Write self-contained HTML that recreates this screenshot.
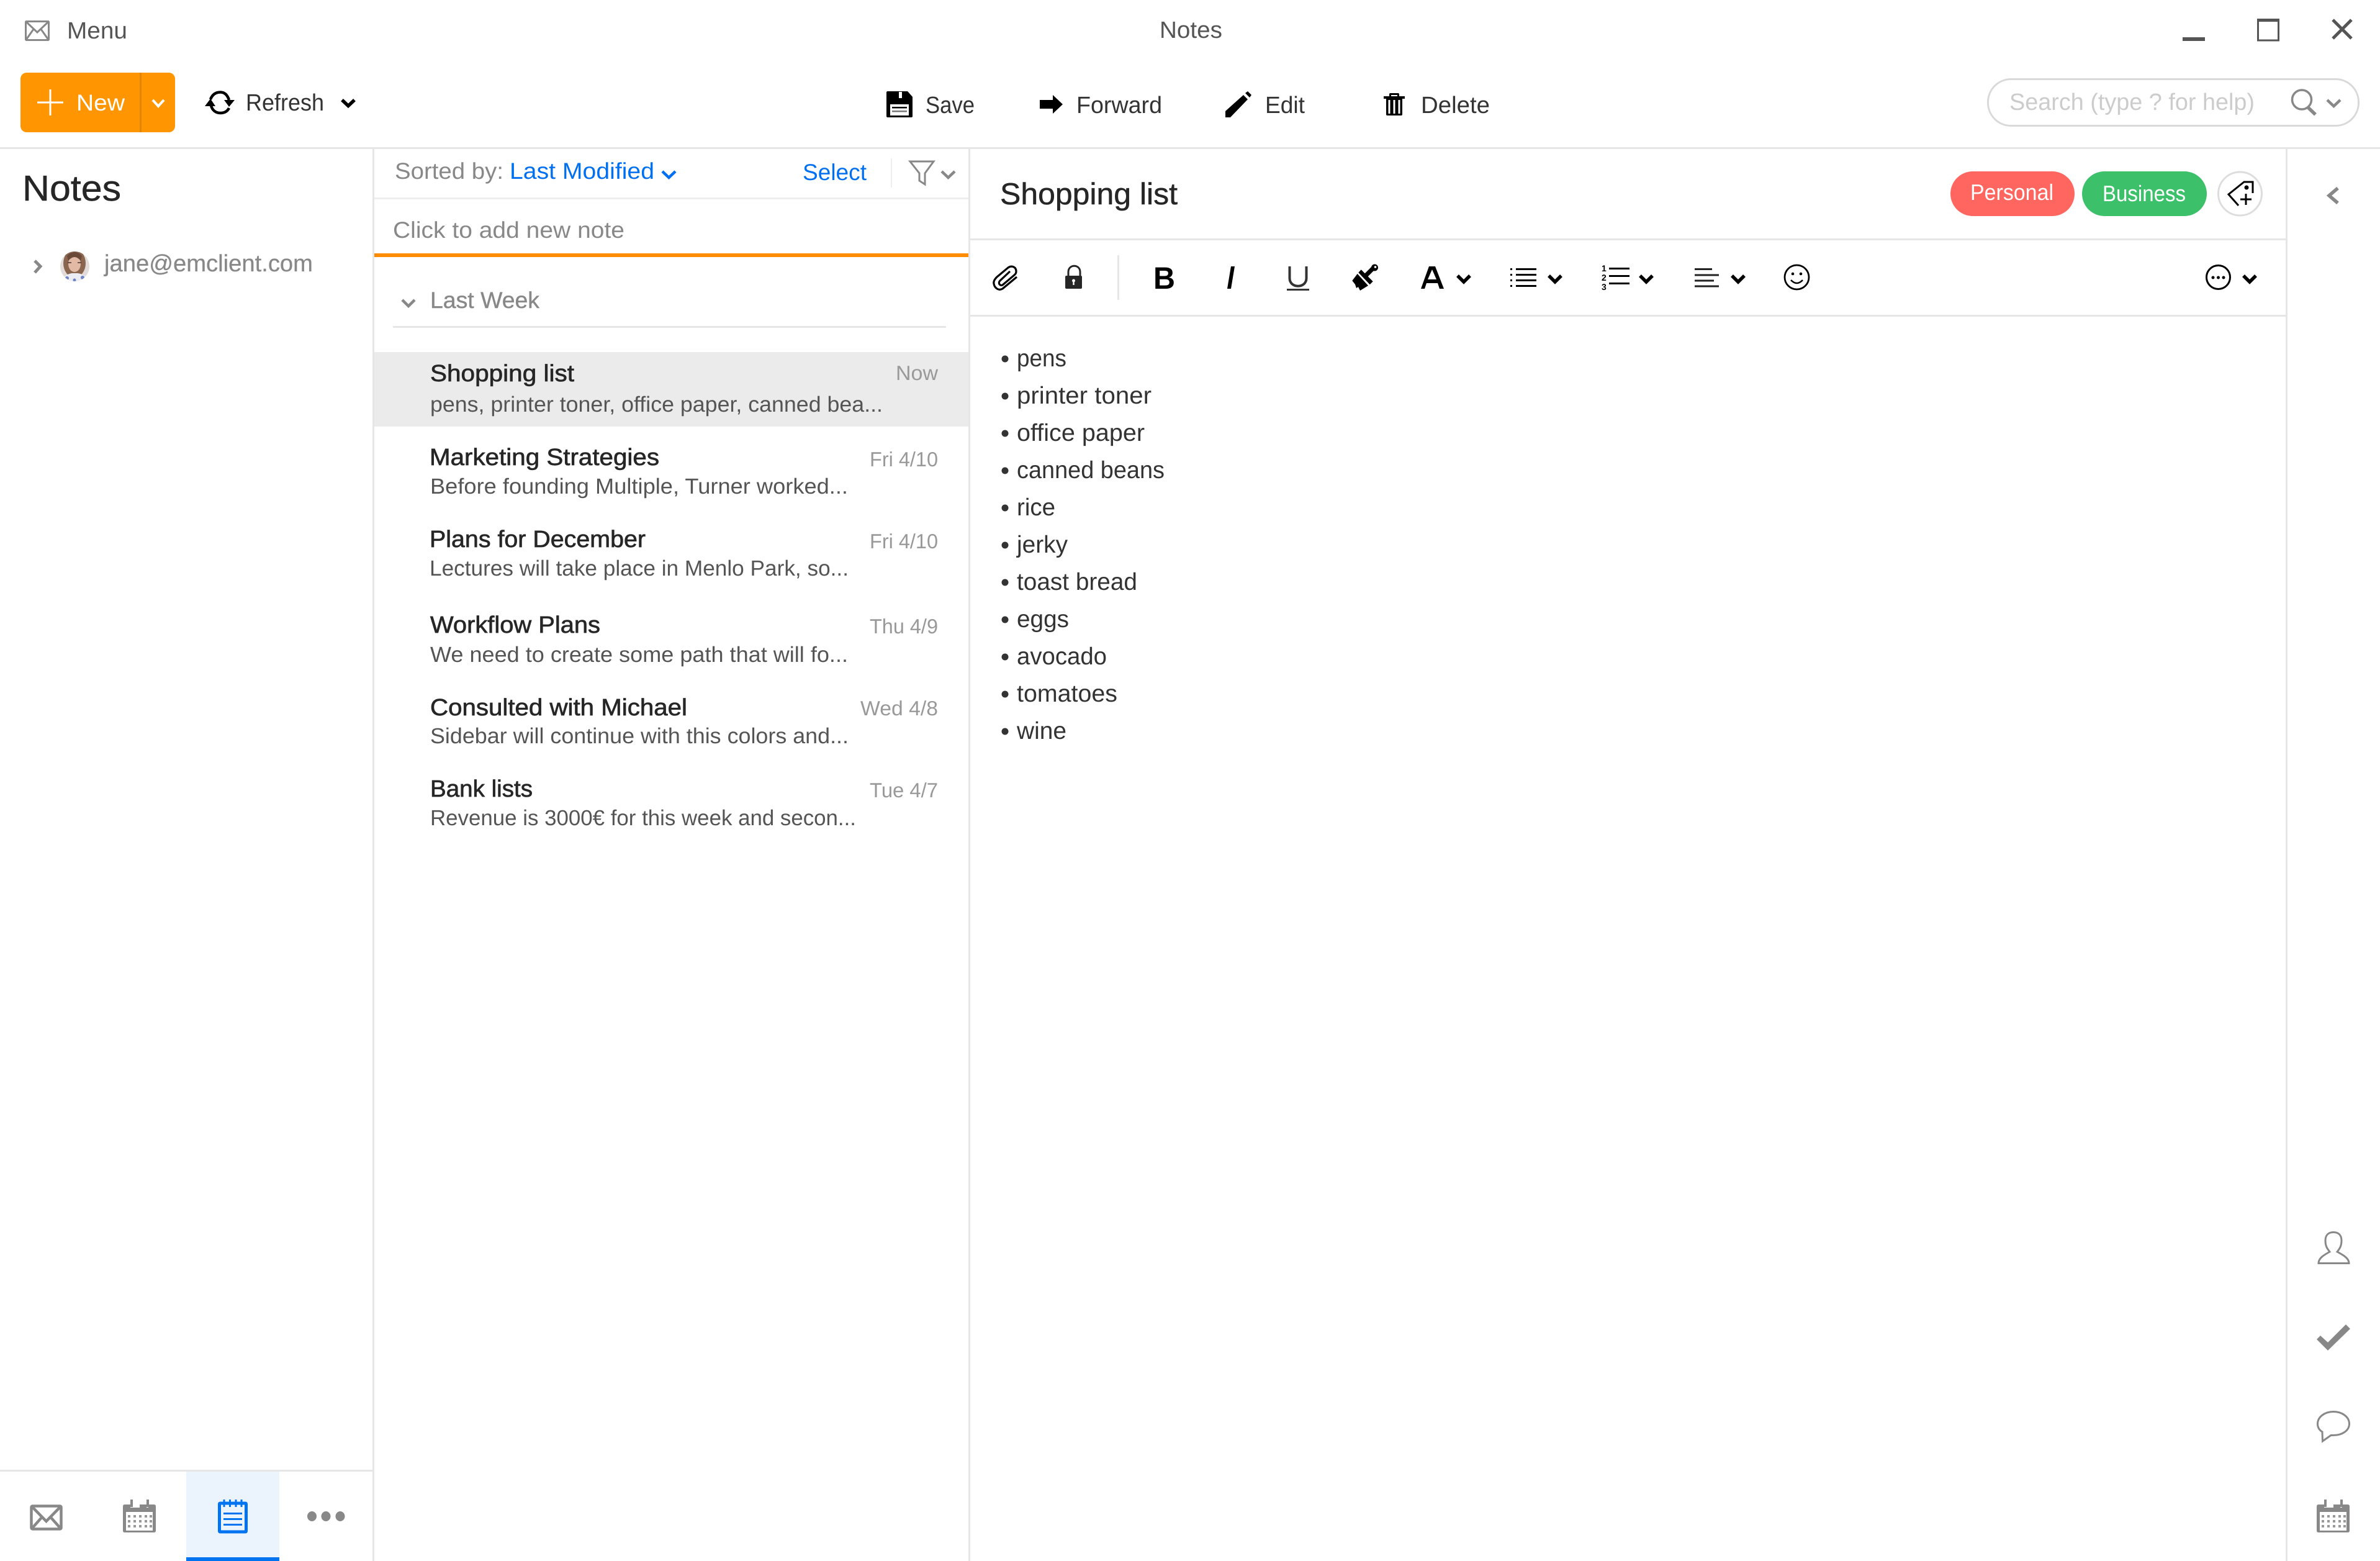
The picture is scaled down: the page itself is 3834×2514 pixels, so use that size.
<!DOCTYPE html>
<html lang="en"><head><meta charset="utf-8"><title>Notes</title>
<style>
html,body{margin:0;padding:0;background:#fff;width:3834px;height:2514px;overflow:hidden}
svg{display:block;font-family:"Liberation Sans",sans-serif;text-rendering:geometricPrecision}
.t{font-size:38px;fill:#333}
.m{font-size:38px;fill:#262626;stroke:#262626;stroke-width:.7}
.p{font-size:35px;fill:#555}
.d{font-size:33px;fill:#999}
.b{font-size:39px;fill:#333}
.g{fill:none;stroke:#888}
.c{fill:none;stroke:#000;stroke-width:5.5}
</style></head><body>
<svg xmlns="http://www.w3.org/2000/svg" width="3834" height="2514" viewBox="0 0 3834 2514">
<defs>
<symbol id="cal" viewBox="0 0 53 53" width="53" height="53">
<path d="M3 8H12V13H27V8H38V13H41V8H50Q53 8 53 11V50Q53 53 50 53H3Q0 53 0 50V11Q0 8 3 8Z" fill="#888"/>
<rect x="12" y="0" width="4" height="12" fill="#888"/><rect x="38" y="0" width="4" height="12" fill="#888"/>
<rect x="5" y="20" width="43" height="30" fill="#fff"/>
<g fill="#999"><rect x="8" y="25" width="4" height="4"/><rect x="17" y="25" width="4" height="4"/><rect x="26" y="25" width="4" height="4"/><rect x="35" y="25" width="4" height="4"/><rect x="43" y="25" width="4" height="4"/>
<rect x="8" y="33" width="4" height="4"/><rect x="17" y="33" width="4" height="4"/><rect x="26" y="33" width="4" height="4"/><rect x="35" y="33" width="4" height="4"/><rect x="43" y="33" width="4" height="4"/>
<rect x="8" y="41" width="4" height="4"/><rect x="17" y="41" width="4" height="4"/><rect x="26" y="41" width="4" height="4"/><rect x="35" y="41" width="4" height="4"/><rect x="43" y="41" width="4" height="4"/></g>
</symbol>
<clipPath id="av"><ellipse cx="120.5" cy="429" rx="23.5" ry="24"/></clipPath>
</defs>

<!-- structure lines -->
<rect x="0" y="237" width="3834" height="3" fill="#e6e6e6"/>
<rect x="600" y="240" width="3" height="2274" fill="#e6e6e6"/>
<rect x="1560" y="240" width="3" height="2274" fill="#e6e6e6"/>
<rect x="3682" y="240" width="3" height="2274" fill="#e6e6e6"/>
<rect x="603" y="318" width="957" height="3" fill="#eee"/>
<rect x="603" y="408" width="957" height="6" fill="#ff8c00"/>
<rect x="633" y="525" width="891" height="3" fill="#e6e6e6"/>
<rect x="603" y="567" width="957" height="120" fill="#ebebeb"/>
<rect x="1435" y="255" width="2" height="47" fill="#eee"/>
<rect x="1563" y="384" width="2119" height="3" fill="#e6e6e6"/>
<rect x="1563" y="507" width="2119" height="3" fill="#e6e6e6"/>
<rect x="1800" y="411" width="3" height="72" fill="#e6e6e6"/>
<rect x="0" y="2367" width="600" height="3" fill="#e6e6e6"/>

<!-- title bar -->
<g class="g" stroke-width="3"><rect x="41.5" y="34.5" width="37" height="30" rx="1"/><path d="M42 35L60 52L78 35M42 64L54 47M78 64L66 47"/></g>
<text x="108" y="62" class="t" style="fill:#555" textLength="97" lengthAdjust="spacingAndGlyphs">Menu</text>
<text x="1868" y="61" class="t" style="fill:#555" textLength="101" lengthAdjust="spacingAndGlyphs">Notes</text>
<rect x="3516" y="60" width="36" height="6" fill="#555"/>
<rect x="3637.5" y="32" width="33" height="33" fill="none" stroke="#555" stroke-width="3"/><rect x="3636" y="30" width="36" height="5" fill="#555"/>
<path d="M3758 32L3788 62M3788 32L3758 62" fill="none" stroke="#555" stroke-width="5"/>

<!-- new button -->
<rect x="33" y="117" width="249" height="96" rx="10" fill="#ff9500"/>
<rect x="225" y="117" width="3" height="96" fill="#e08600"/>
<path d="M60 165H102M81 144V186" stroke="#fff" stroke-width="3" fill="none"/>
<text x="123" y="178" style="font-size:37px;fill:#fff" textLength="78" lengthAdjust="spacingAndGlyphs">New</text>
<path d="M246 161L255 171L264 161" fill="none" stroke="#fff" stroke-width="4"/>

<!-- refresh -->
<path d="M339 160C343 150 350 148.5 355 148.5C361 148.5 366 152 369 161" fill="none" stroke="#000" stroke-width="4.5"/>
<path d="M361 161H378L369 172Z"/>
<path d="M340 170C342 178 348 182 355 182C361 182 366 180 369 174" fill="none" stroke="#000" stroke-width="4.5"/>
<path d="M330 171H347L339 159Z"/>
<text x="396" y="178" class="t" textLength="126" lengthAdjust="spacingAndGlyphs">Refresh</text>
<path class="c" d="M551 161L561 170.5L571 161"/>

<!-- save -->
<path d="M1430 147H1462L1470 156V187Q1470 189 1468 189H1430Q1428 189 1428 187V149Q1428 147 1430 147Z"/>
<rect x="1448" y="148" width="5" height="10" fill="#fff"/>
<rect x="1434" y="168" width="30" height="18" fill="#fff"/>
<rect x="1437" y="172" width="24" height="2.5" fill="#000"/><rect x="1437" y="178" width="24" height="2.5" fill="#777"/>
<text x="1491" y="182" class="t" textLength="79" lengthAdjust="spacingAndGlyphs">Save</text>
<!-- forward -->
<path d="M1675 161H1696V153L1712 168L1696 183V175H1675Z"/>
<text x="1734" y="182" class="t" textLength="138" lengthAdjust="spacingAndGlyphs">Forward</text>
<!-- edit -->
<path d="M1974 189V179L2003 153L2010 160L1982 189Z"/><path d="M2006 150L2010 147L2016 153L2013 157Z"/>
<text x="2038" y="182" class="t" textLength="64" lengthAdjust="spacingAndGlyphs">Edit</text>
<!-- delete -->
<path d="M2238 156V152Q2238 150 2240 150H2252Q2254 150 2254 152V156H2251V153H2241V156Z"/>
<rect x="2229" y="155" width="34" height="4"/>
<path d="M2233 159H2259V184Q2259 186 2257 186H2235Q2233 186 2233 184Z"/>
<rect x="2236.5" y="161" width="3" height="22" fill="#fff"/><rect x="2244.5" y="161" width="3" height="22" fill="#fff"/><rect x="2252.5" y="161" width="3" height="22" fill="#fff"/>
<text x="2289" y="182" class="t" textLength="111" lengthAdjust="spacingAndGlyphs">Delete</text>

<!-- search -->
<rect x="3202.5" y="127.5" width="597" height="75" rx="37" fill="#fff" stroke="#d9d9d9" stroke-width="3"/>
<text x="3237" y="177" style="font-size:38px;fill:#ccc" textLength="395" lengthAdjust="spacingAndGlyphs">Search (type ? for help)</text>
<circle cx="3708" cy="160.5" r="15.5" class="g" stroke-width="3.5"/>
<path d="M3718 173L3730 184.5" class="g" stroke-width="5.5"/>
<path d="M3749 161L3759.5 171L3770 161" class="g" stroke-width="4.5"/>

<!-- left pane -->
<text x="36" y="323" style="font-size:58px;fill:#262626;stroke:#262626;stroke-width:.5" textLength="159" lengthAdjust="spacingAndGlyphs">Notes</text>
<path d="M56 420L65 429L56 439" class="g" stroke-width="5"/>
<g clip-path="url(#av)">
<rect x="95" y="403" width="52" height="52" fill="#e2dbd8"/>
<ellipse cx="120" cy="424" rx="18" ry="23" fill="#8a6651"/>
<ellipse cx="120" cy="425" rx="10" ry="13" fill="#e2b9a5"/>
<path d="M110 420Q120 408 130 420L132 412Q120 400 108 412Z" fill="#6b4a3a"/>
<path d="M109 423h6M125 423h6" stroke="#4a3028" stroke-width="1.5"/>
<path d="M98 456Q102 442 116 440H125Q140 442 144 456Z" fill="#ecedf4"/>
<circle cx="108" cy="448" r="3" fill="#6f84c4"/><circle cx="133" cy="447" r="3" fill="#6f84c4"/><circle cx="120" cy="451" r="2.5" fill="#6f84c4"/>
</g>
<text x="168" y="437" class="t" style="fill:#888;stroke:#888;stroke-width:.3" textLength="336" lengthAdjust="spacingAndGlyphs">jane@emclient.com</text>

<!-- bottom nav -->
<rect x="300" y="2370" width="150" height="144" fill="#ebf3fd"/>
<rect x="300" y="2508" width="150" height="6" fill="#0073f0"/>
<g class="g" stroke-width="4.5"><rect x="50.5" y="2425.5" width="48" height="37" rx="2"/><path d="M51 2426L74.5 2450L98 2426M51 2462L67 2444M98 2462L82 2444"/></g>
<use href="#cal" x="198" y="2415"/>
<g fill="none" stroke="#0073f0">
<rect x="353.5" y="2421" width="43" height="46" rx="1" stroke-width="5"/>
<path d="M361 2415V2427M370.5 2415V2427M380 2415V2427M389 2415V2427" stroke-width="3"/>
<path d="M360 2437.5H390M360 2446.5H390M360 2455.5H390" stroke-width="3"/>
</g>
<g fill="#888"><ellipse cx="502.5" cy="2442" rx="7.5" ry="8"/><ellipse cx="525" cy="2442" rx="7.5" ry="8"/><ellipse cx="548" cy="2442" rx="7.5" ry="8"/></g>

<!-- list header -->
<text x="636" y="288" style="font-size:37px;fill:#888" textLength="175" lengthAdjust="spacingAndGlyphs">Sorted by:</text>
<text x="821" y="288" style="font-size:37px;fill:#0070f0" textLength="233" lengthAdjust="spacingAndGlyphs">Last Modified</text>
<path d="M1067 276L1077.5 286L1088 276" fill="none" stroke="#0070f0" stroke-width="4.5"/>
<text x="1293" y="290" style="font-size:37px;fill:#0070f0" textLength="103" lengthAdjust="spacingAndGlyphs">Select</text>
<path d="M1466 260H1504L1490 279V297L1481 291V279Z" class="g" stroke-width="3"/>
<path d="M1517 276L1527.5 286L1538 276" class="g" stroke-width="4.5"/>
<text x="633" y="383" style="font-size:37px;fill:#888" textLength="373" lengthAdjust="spacingAndGlyphs">Click to add new note</text>
<path d="M648 483L658 493L668 483" class="g" stroke-width="4.5"/>
<text x="693" y="496" style="font-size:37px;fill:#888;stroke:#888;stroke-width:.4" textLength="176" lengthAdjust="spacingAndGlyphs">Last Week</text>

<!-- list items -->
<text x="693" y="614" class="m" textLength="232" lengthAdjust="spacingAndGlyphs">Shopping list</text>
<text x="1443" y="612" class="d" textLength="68" lengthAdjust="spacingAndGlyphs">Now</text>
<text x="693" y="663" class="p" textLength="729" lengthAdjust="spacingAndGlyphs">pens, printer toner, office paper, canned bea...</text>

<text x="692" y="749" class="m" textLength="370" lengthAdjust="spacingAndGlyphs">Marketing Strategies</text>
<text x="1401" y="751" class="d" textLength="110" lengthAdjust="spacingAndGlyphs">Fri 4/10</text>
<text x="693" y="795" class="p" textLength="673" lengthAdjust="spacingAndGlyphs">Before founding Multiple, Turner worked...</text>

<text x="692" y="881" class="m" textLength="348" lengthAdjust="spacingAndGlyphs">Plans for December</text>
<text x="1401" y="883" class="d" textLength="110" lengthAdjust="spacingAndGlyphs">Fri 4/10</text>
<text x="692" y="927" class="p" textLength="675" lengthAdjust="spacingAndGlyphs">Lectures will take place in Menlo Park, so...</text>

<text x="693" y="1019" class="m" textLength="274" lengthAdjust="spacingAndGlyphs">Workflow Plans</text>
<text x="1401" y="1020" class="d" textLength="110" lengthAdjust="spacingAndGlyphs">Thu 4/9</text>
<text x="693" y="1066" class="p" textLength="673" lengthAdjust="spacingAndGlyphs">We need to create some path that will fo...</text>

<text x="693" y="1152" class="m" textLength="414" lengthAdjust="spacingAndGlyphs">Consulted with Michael</text>
<text x="1386" y="1152" class="d" textLength="125" lengthAdjust="spacingAndGlyphs">Wed 4/8</text>
<text x="693" y="1197" class="p" textLength="674" lengthAdjust="spacingAndGlyphs">Sidebar will continue with this colors and...</text>

<text x="693" y="1283" class="m" textLength="165" lengthAdjust="spacingAndGlyphs">Bank lists</text>
<text x="1401" y="1284" class="d" textLength="110" lengthAdjust="spacingAndGlyphs">Tue 4/7</text>
<text x="693" y="1329" class="p" textLength="686" lengthAdjust="spacingAndGlyphs">Revenue is 3000€ for this week and secon...</text>

<!-- note header -->
<text x="1611" y="329" style="font-size:49px;fill:#262626;stroke:#262626;stroke-width:.5" textLength="286" lengthAdjust="spacingAndGlyphs">Shopping list</text>
<rect x="3142" y="276" width="200" height="72" rx="36" fill="#ff665f"/>
<text x="3174" y="322" style="font-size:36px;fill:#fff" textLength="134" lengthAdjust="spacingAndGlyphs">Personal</text>
<rect x="3354" y="276" width="201" height="72" rx="36" fill="#3cc06a"/>
<text x="3387" y="324" style="font-size:36px;fill:#fff" textLength="134" lengthAdjust="spacingAndGlyphs">Business</text>
<circle cx="3608.5" cy="312" r="35" fill="#fff" stroke="#ddd" stroke-width="3"/>
<path d="M3606 331L3590 313L3615 293H3629V311" fill="none" stroke="#000" stroke-width="3"/>
<circle cx="3619" cy="302" r="3.5"/>
<path d="M3609 321H3627M3618 312V330" stroke="#000" stroke-width="3" fill="none"/>
<path d="M3766 303L3752 315L3766 327" class="g" stroke-width="5.5"/>

<!-- format toolbar -->
<path d="M1638 446L1615 465C1608 469 1602 463 1601 457C1600 453 1603 449 1606 446L1624 431C1630 427 1637 430 1637 437C1637 440 1636 441 1634 443L1615 459C1611 461 1607 456 1611 452L1627 437" fill="none" stroke="#000" stroke-width="3.2"/>
<path d="M1721 446V438C1721 425 1740 425 1740 438V446" fill="none" stroke="#262626" stroke-width="3"/>
<rect x="1716" y="444" width="27" height="21" rx="2" fill="#262626"/>
<circle cx="1729.5" cy="452" r="2.5" fill="#fff"/><rect x="1728.3" y="452" width="2.4" height="7" fill="#fff"/>
<text x="1858" y="465" style="font-size:50px;font-weight:700;fill:#000" textLength="35" lengthAdjust="spacingAndGlyphs">B</text>
<path d="M1983 429H1989L1983 465H1977Z"/>
<path d="M2077.5 429V448C2077.5 465 2104.5 465 2104.5 448V429" fill="none" stroke="#333" stroke-width="4"/>
<rect x="2073" y="465" width="36" height="3" fill="#333"/>
<circle cx="2214.5" cy="431" r="5.5"/>
<path d="M2213 431L2199 445" stroke="#000" stroke-width="7" fill="none"/>
<path d="M2192.7 434.3L2211.7 453.3L2206.7 458.3L2188.3 439Z"/>
<path d="M2186.7 441L2204 460L2191 468L2188 462L2185 464L2183 458L2178.3 452Z"/>
<circle cx="2215.5" cy="430" r="1.8" fill="#fff"/>
<path d="M2302 429H2312L2326 465H2319L2316 456H2298L2295 465H2289ZM2300 450H2314L2307 434Z" fill-rule="evenodd"/>
<path class="c" d="M2348 444L2358 454L2368 444"/>
<g fill="#000"><rect x="2433" y="432" width="3" height="3"/><rect x="2433" y="441" width="3" height="3"/><rect x="2433" y="450" width="3" height="3"/><rect x="2433" y="459" width="3" height="3"/>
<rect x="2442" y="432" width="33" height="3"/><rect x="2442" y="441" width="33" height="3"/><rect x="2442" y="450" width="33" height="3"/><rect x="2442" y="459" width="33" height="3"/></g>
<path class="c" d="M2495 444L2505 454L2515 444"/>
<g style="font-size:14px;font-weight:700;fill:#000"><text x="2580" y="437">1</text><text x="2580" y="452">2</text><text x="2580" y="467">3</text></g>
<g fill="#000"><rect x="2592" y="431" width="33" height="3"/><rect x="2592" y="443" width="33" height="3"/><rect x="2592" y="455" width="33" height="3"/></g>
<path class="c" d="M2642 444L2652 454L2662 444"/>
<g fill="#222"><rect x="2730" y="432" width="28" height="3"/><rect x="2730" y="441.5" width="39" height="3"/><rect x="2730" y="450.5" width="31" height="3"/><rect x="2730" y="459.5" width="39" height="3"/></g>
<path class="c" d="M2790 444L2800 454L2810 444"/>
<circle cx="2894.5" cy="446.5" r="19.5" fill="none" stroke="#000" stroke-width="2.8"/>
<circle cx="2888" cy="441" r="2.3"/><circle cx="2901" cy="441" r="2.3"/>
<path d="M2885 451Q2894.5 461 2904 451" fill="none" stroke="#000" stroke-width="2.5"/>
<circle cx="3573.5" cy="446.5" r="19" fill="none" stroke="#000" stroke-width="3"/>
<circle cx="3565" cy="447" r="2.5"/><circle cx="3573.5" cy="447" r="2.5"/><circle cx="3582" cy="447" r="2.5"/>
<path class="c" d="M3614 444L3624 454L3634 444"/>

<!-- note body -->
<g fill="#333"><circle cx="1619" cy="578" r="5.5"/><circle cx="1619" cy="638" r="5.5"/><circle cx="1619" cy="698" r="5.5"/><circle cx="1619" cy="758" r="5.5"/><circle cx="1619" cy="818" r="5.5"/><circle cx="1619" cy="878" r="5.5"/><circle cx="1619" cy="938" r="5.5"/><circle cx="1619" cy="998" r="5.5"/><circle cx="1619" cy="1058" r="5.5"/><circle cx="1619" cy="1118" r="5.5"/><circle cx="1619" cy="1178" r="5.5"/></g>
<text x="1638" y="590" class="b" textLength="80" lengthAdjust="spacingAndGlyphs">pens</text>
<text x="1638" y="650" class="b" textLength="217" lengthAdjust="spacingAndGlyphs">printer toner</text>
<text x="1638" y="710" class="b" textLength="206" lengthAdjust="spacingAndGlyphs">office paper</text>
<text x="1638" y="770" class="b" textLength="238" lengthAdjust="spacingAndGlyphs">canned beans</text>
<text x="1638" y="830" class="b" textLength="62" lengthAdjust="spacingAndGlyphs">rice</text>
<text x="1638" y="890" class="b" textLength="82" lengthAdjust="spacingAndGlyphs">jerky</text>
<text x="1638" y="950" class="b" textLength="194" lengthAdjust="spacingAndGlyphs">toast bread</text>
<text x="1638" y="1010" class="b" textLength="84" lengthAdjust="spacingAndGlyphs">eggs</text>
<text x="1638" y="1070" class="b" textLength="145" lengthAdjust="spacingAndGlyphs">avocado</text>
<text x="1638" y="1130" class="b" textLength="162" lengthAdjust="spacingAndGlyphs">tomatoes</text>
<text x="1638" y="1190" class="b" textLength="80" lengthAdjust="spacingAndGlyphs">wine</text>

<!-- right rail -->
<path d="M3735 2034.5H3784C3784 2026 3774 2021 3765 2016C3768 2012 3772 2008 3772 1998C3772 1989 3767 1984.5 3759 1984.5C3751 1984.5 3746 1989 3746 1998C3746 2008 3750 2012 3753 2016C3744 2021 3735 2026 3735 2034.5Z" class="g" stroke-width="3"/>
<path d="M3732 2157L3738 2151L3750 2162L3779 2133L3786 2140L3750 2175Z" fill="#888"/>
<path d="M3741.5 2321L3741 2306C3736 2303 3733.5 2299 3733.5 2293C3733.5 2282 3745 2273.5 3759 2273.5C3773 2273.5 3784.5 2282 3784.5 2293C3784.5 2304 3773 2311.5 3759 2311.5H3755Z" class="g" stroke-width="3"/>
<use href="#cal" x="3732" y="2415"/>
</svg>
</body></html>
